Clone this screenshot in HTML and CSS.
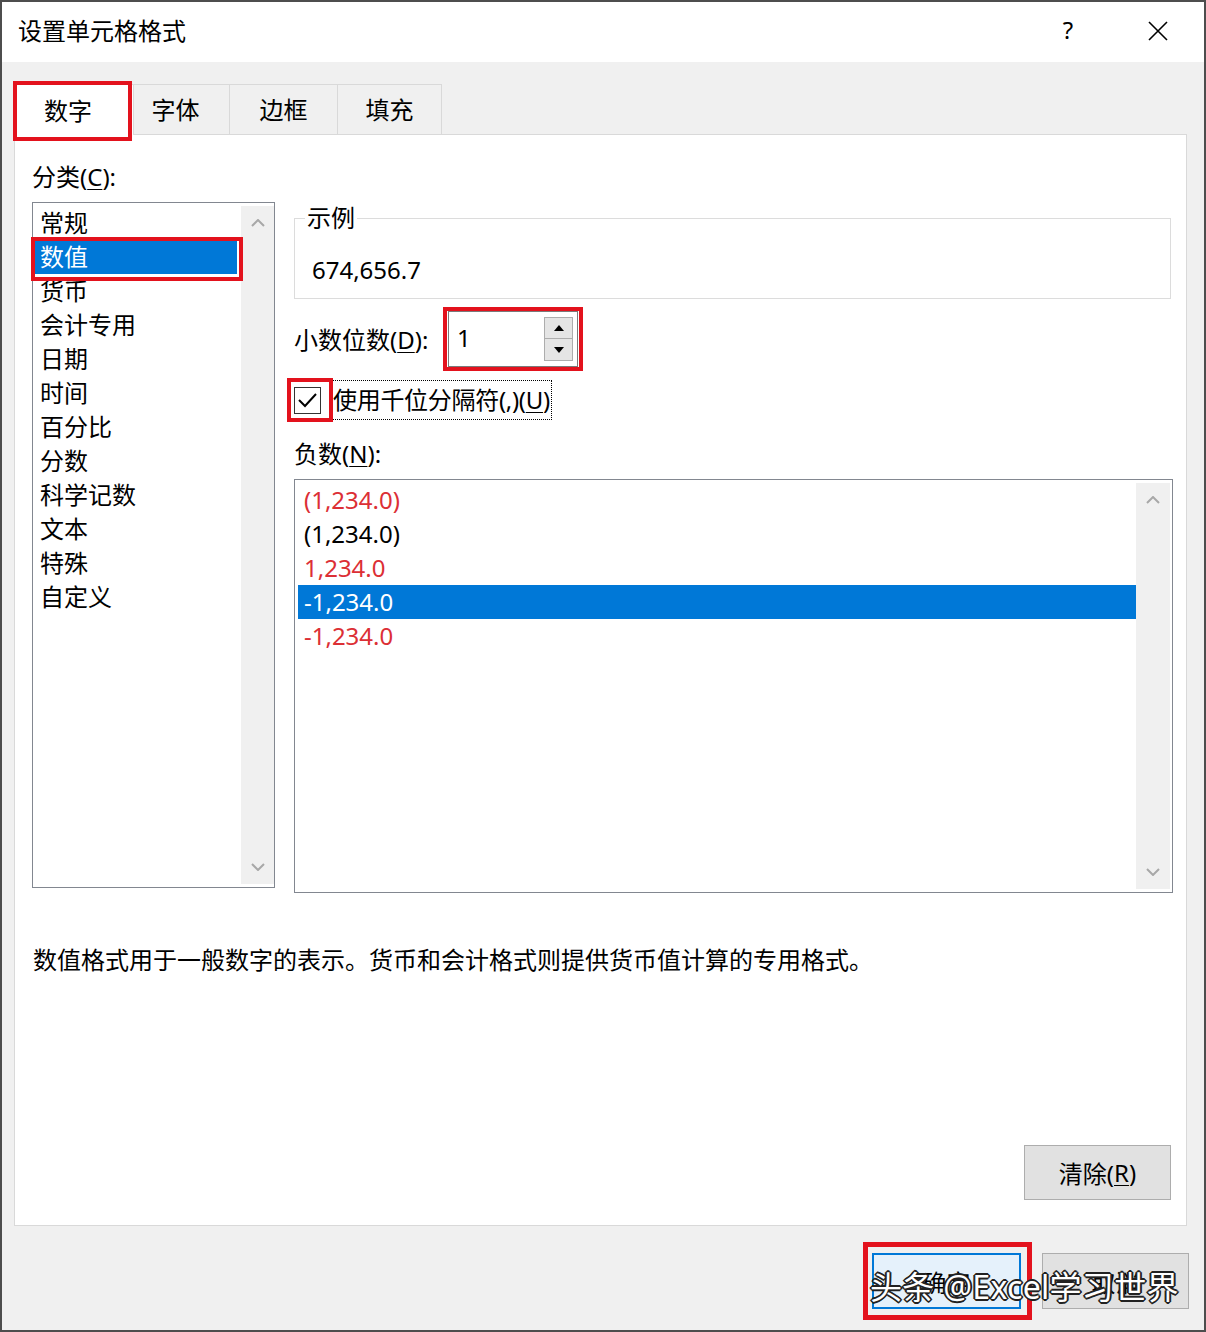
FILE: index.html
```html
<!DOCTYPE html>
<html lang="zh-CN">
<head>
    <meta charset="UTF-8">
    <meta name="viewport" content="width=device-width, initial-scale=1.0">
    <title>设置单元格格式</title>
    <link rel="stylesheet" href="styles.css">
</head>
<body>
    <div class="dialog">
        <div class="titlebar">
            <div class="title">设置单元格格式</div>
            <span class="help">?</span>
            <svg class="close" width="20" height="20" viewBox="0 0 20 20">
                <path d="M1 1 L19 19 M19 1 L1 19" stroke="#000" stroke-width="1.6" fill="none"/>
            </svg>
        </div>

        <div class="content">
            <div class="tabs">
                <div class="tab active mark">数字</div>
                <div class="tab tab-font">字体</div>
                <div class="tab tab-border">边框</div>
                <div class="tab tab-fill">填充</div>
            </div>

            <div class="panel">
                <div class="cat-label">分类(<u>C</u>):</div>

                <div class="main">
                    <!-- 分类列表 -->
                    <div class="listbox cat-list">
                        <div class="items" id="catItems"></div>
                        <div class="scroll">
                            <svg width="14" height="8" viewBox="0 0 14 8"><path d="M1 7 L7 1 L13 7" stroke="#a8a8a8" stroke-width="2" fill="none"/></svg>
                            <svg width="14" height="8" viewBox="0 0 14 8"><path d="M1 1 L7 7 L13 1" stroke="#a8a8a8" stroke-width="2" fill="none"/></svg>
                        </div>
                    </div>

                    <div class="right">
                        <fieldset class="sample">
                            <legend>示例</legend>
                            <div class="sample-value">674,656.7</div>
                        </fieldset>

                        <div class="decimal-row">
                            <div class="decimal-label">小数位数(<u>D</u>):</div>
                            <div class="spin mark">
                                <div class="spin-value">1</div>
                                <div class="spin-btns">
                                    <div class="spin-btn">
                                        <svg width="10" height="6" viewBox="0 0 10 6"><path d="M0 6 L5 0 L10 6 Z" fill="#000"/></svg>
                                    </div>
                                    <div class="spin-btn">
                                        <svg width="10" height="6" viewBox="0 0 10 6"><path d="M0 0 L5 6 L10 0 Z" fill="#000"/></svg>
                                    </div>
                                </div>
                            </div>
                        </div>

                        <div class="check-row">
                            <div class="checkbox mark">
                                <svg width="25" height="25" viewBox="0 0 25 25"><path d="M4 12 L10 18 L21 6" stroke="#000" stroke-width="2" fill="none"/></svg>
                            </div>
                            <div class="check-label">使用千位分隔符(,)(<u>U</u>)</div>
                        </div>

                        <div class="neg-label">负数(<u>N</u>):</div>

                        <!-- 负数格式列表 -->
                        <div class="listbox neg-list">
                            <div class="items" id="negItems"></div>
                            <div class="scroll">
                                <svg width="14" height="8" viewBox="0 0 14 8"><path d="M1 7 L7 1 L13 7" stroke="#a8a8a8" stroke-width="2" fill="none"/></svg>
                                <svg width="14" height="8" viewBox="0 0 14 8"><path d="M1 1 L7 7 L13 1" stroke="#a8a8a8" stroke-width="2" fill="none"/></svg>
                            </div>
                        </div>
                    </div>
                </div>

                <div class="desc">数值格式用于一般数字的表示。货币和会计格式则提供货币值计算的专用格式。</div>

                <div class="clear-row">
                    <div class="btn">清除(<u>R</u>)</div>
                </div>
            </div>

            <div class="footer">
                <div class="btn btn-ok mark">确定</div>
                <div class="btn">取消</div>
            </div>
        </div>

        <div class="watermark">头条 @Excel学习世界</div>
    </div>

    <script>
        // 分类
        const categories = ["常规", "数值", "货币", "会计专用", "日期", "时间", "百分比", "分数", "科学记数", "文本", "特殊", "自定义"];
        const catBox = document.getElementById("catItems");
        categories.forEach((name, i) => {
            const div = document.createElement("div");
            div.className = "item" + (i === 1 ? " selected mark" : "");
            div.textContent = name;
            catBox.appendChild(div);
        });

        // 负数格式
        const negatives = [
            { text: "(1,234.0)", red: true },
            { text: "(1,234.0)", red: false },
            { text: "1,234.0", red: true },
            { text: "-1,234.0", red: false, selected: true },
            { text: "-1,234.0", red: true }
        ];
        const negBox = document.getElementById("negItems");
        negatives.forEach(row => {
            const div = document.createElement("div");
            div.className = "item" + (row.red ? " red" : "") + (row.selected ? " selected" : "");
            div.textContent = row.text;
            negBox.appendChild(div);
        });
    </script>
</body>
</html>
```

FILE: styles.css
```css
* {
    box-sizing: border-box;
}

body {
    margin: 0;
    font-family: "Noto Sans", "Noto Sans CJK SC", sans-serif;
    font-size: 24px;
    color: #000;
    background-color: #fff;
}

u {
    text-decoration-thickness: 1px;
    text-underline-offset: 3px;
}

.dialog {
    position: relative;
    width: 1206px;
    height: 1332px;
    border: 2px solid #4d4d4d;
    background-color: #f0f0f0;
    display: flex;
    flex-direction: column;
}

/* 标题栏 */
.titlebar {
    height: 60px;
    flex: none;
    background-color: #fff;
    display: flex;
    align-items: center;
    padding: 0 36px 5px 16px;
}

.title {
    flex: 1;
}

.help {
    width: 20px;
    text-align: center;
    margin-right: 70px;
}

.close {
    margin-top: 2px;
}

.content {
    flex: 1;
    display: flex;
    flex-direction: column;
    padding: 22px 17px 0 12px;
}

/* 选项卡 */
.tabs {
    display: flex;
    height: 50px;
    flex: none;
}

.tab {
    height: 50px;
    border: 1px solid #d9d9d9;
    border-bottom: none;
    margin-left: -1px;
    background-color: #f0f0f0;
    display: flex;
    align-items: center;
    justify-content: center;
    padding-bottom: 2px;
}

.tab.active {
    margin-left: 0;
    width: 120px;
    padding-right: 12px;
    background-color: #fff;
    height: 51px;
    position: relative;
    z-index: 1;
}

.tab-font {
    width: 97px;
    padding-right: 12px;
}

.tab-border {
    width: 109px;
}

.tab-fill {
    width: 105px;
}

/* 红色标注框 */
.mark {
    position: relative;
}

.mark::after {
    content: "";
    position: absolute;
    border: 4px solid #e3121d;
    pointer-events: none;
}

.tab.active::after {
    left: -2px;
    right: 1px;
    top: -4px;
    bottom: -6px;
}

.panel {
    flex: 1;
    background-color: #fff;
    border: 1px solid #d9d9d9;
    padding: 27px 13px 25px 17px;
    display: flex;
    flex-direction: column;
}

.cat-label {
    line-height: 30px;
    height: 30px;
}

.main {
    display: flex;
    gap: 19px;
    margin-top: 10px;
}

/* 列表框 */
.listbox {
    border: 1px solid #828790;
    display: flex;
    background-color: #fff;
}

.cat-list {
    width: 243px;
    height: 686px;
    flex: none;
    padding: 3px 0 3px 2px;
}

.cat-list .items {
    flex: 1;
    margin-right: 4px;
}

.item {
    height: 34px;
    line-height: 34px;
    padding-left: 5px;
    white-space: nowrap;
}

.item.selected {
    background-color: #0078d7;
    color: #fff;
}

.item.selected.mark::after {
    left: -4px;
    right: -6px;
    top: -3px;
    bottom: -7px;
}

.scroll {
    width: 33px;
    flex: none;
    background-color: #f0f0f0;
    display: flex;
    flex-direction: column;
    justify-content: space-between;
    align-items: center;
    padding: 13px 0;
}

.right {
    flex: 1;
    display: flex;
    flex-direction: column;
}

/* 示例 */
.sample {
    margin: 1px 2px 0 0;
    padding: 0 10px 13px;
    border: 1px solid #dcdcdc;
    min-width: 0;
}

.sample legend {
    padding: 0 2px;
    line-height: 30px;
}

.sample-value {
    margin: 22px 0 0 7px;
    line-height: 30px;
}

.decimal-row {
    display: flex;
    align-items: center;
    height: 56px;
    margin-top: 12px;
}

.decimal-label {
    width: 154px;
    padding-bottom: 2px;
}

.spin {
    width: 130px;
    height: 56px;
    border: 1px solid #7a7a7a;
    background-color: #fff;
    display: flex;
    align-items: center;
    padding-left: 8px;
}

.spin.mark::after {
    left: -6px;
    right: -6px;
    top: -5px;
    bottom: -5px;
}

.spin-value {
    flex: 1;
    padding-bottom: 4px;
}

.spin-btns {
    width: 29px;
    margin-right: 4px;
    display: flex;
    flex-direction: column;
}

.spin-btn {
    height: 22px;
    background-color: #e5e5e5;
    border: 1px solid #adadad;
    display: flex;
    align-items: center;
    justify-content: center;
}

.spin-btn + .spin-btn {
    border-top: none;
}

.check-row {
    display: flex;
    align-items: center;
    height: 40px;
    margin-top: 13px;
}

.checkbox {
    width: 27px;
    height: 27px;
    flex: none;
    border: 1px solid #333;
    background-color: #fff;
}

.checkbox svg {
    display: block;
}

.checkbox.mark::after {
    left: -8px;
    right: -13px;
    top: -10px;
    bottom: -9px;
}

.check-label {
    margin-left: 11px;
    height: 40px;
    line-height: 38px;
    border: 1px dotted #000;
    padding: 0 1px 0 0;
    letter-spacing: -0.3px;
}

.neg-label {
    line-height: 30px;
    margin-top: 19px;
}

.neg-list {
    margin-top: 10px;
    height: 414px;
    padding: 3px 2px 3px 3px;
}

.neg-list .items {
    flex: 1;
}

.neg-list .item {
    padding-left: 6px;
}

.neg-list .scroll {
    width: 34px;
}

.item.red {
    color: #dc2f35;
}

.desc {
    margin-top: 52px;
    line-height: 30px;
    padding-left: 1px;
}

.clear-row {
    margin-top: auto;
    display: flex;
    justify-content: flex-end;
    padding-right: 2px;
}

/* 按钮 */
.btn {
    width: 147px;
    height: 56px;
    background-color: #e1e1e1;
    border: 1px solid #adadad;
    display: flex;
    align-items: center;
    justify-content: center;
}

.clear-row .btn {
    height: 55px;
}

.footer {
    height: 104px;
    flex: none;
    display: flex;
    justify-content: flex-end;
    align-items: flex-start;
    gap: 21px;
    padding-top: 27px;
    margin-right: -2px;
}

.btn-ok {
    width: 149px;
    border: 2px solid #0078d7;
    background-color: #e5f1fb;
}

.btn-ok.mark::after {
    left: -11px;
    right: -13px;
    top: -13px;
    bottom: -13px;
    border-width: 5px;
}

.watermark {
    position: absolute;
    left: 868px;
    top: 1265px;
    font-size: 32px;
    line-height: 40px;
    color: #fff;
    white-space: nowrap;
    letter-spacing: 0.3px;
    text-shadow: 1px 1px 0 #222, -1px -1px 0 #222, 1px -1px 0 #222, -1px 1px 0 #222,
                 2px 0 0 #222, -2px 0 0 #222, 0 2px 0 #222, 0 -2px 0 #222;
}
```
